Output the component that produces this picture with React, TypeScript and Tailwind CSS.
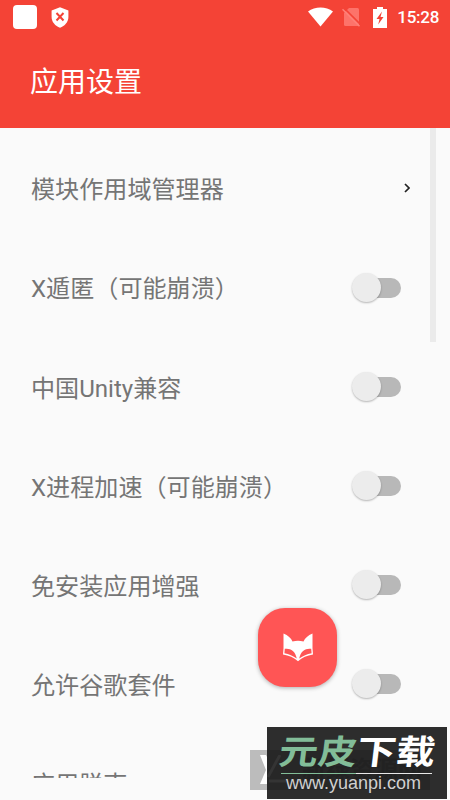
import { useState } from 'react';

const settings = [
  'X遁匿（可能崩溃）',
  '中国Unity兼容',
  'X进程加速（可能崩溃）',
  '免安装应用增强',
  '允许谷歌套件',
  '应用脱壳',
];

function StatusBar() {
  return (
    <div className="flex h-[35px] items-center pl-[13px] pr-[11px] text-white">
      <div className="mt-[-1px] h-[24px] w-[24px] rounded-[4px] bg-white" />
      <svg className="ml-[14px] h-[21px] w-[18px]" viewBox="0 0 18 21">
        <path d="M9 .2 17.400 3.400v6.500c0 5-3.700 9-8.400 10.800C4.300 18.900.6 14.900.6 9.900V3.400z" fill="#fff" />
        <path d="m5.500 6 7 7.500m0-7.500-7 7.500" stroke="#f44336" strokeWidth="2" />
      </svg>
      <svg className="ml-auto mt-[-2px] h-[20px] w-[25px]" viewBox="0 0 25 20">
        <path d="M0 4.500C7-.9 18-.9 25 4.500L12.500 19.500z" fill="#fff" />
      </svg>
      <svg className="ml-[9px] mt-[-1px] h-[20px] w-[19px]" viewBox="0 0 19 20">
        <path d="M7 1h8.500a1.500 1.500 0 0 1 1.500 1.500V19H3.500A1.500 1.500 0 0 1 2 17.500V6z" fill="#ff8078" fillOpacity=".8" />
        <path d="m2 1 17 17" stroke="#f44336" strokeWidth="1.600" />
        <path d="m.5 2.200 17 17" stroke="#ff8078" strokeWidth="1.600" />
      </svg>
      <svg className="ml-[12px] mt-[-1px] h-[21px] w-[14px]" viewBox="0 0 14 21">
        <path d="M4 0h6v2h4v19H0V2h4z" fill="#fff" />
        <path d="M9 4.500 3.500 12h3l-1.300 5.500L10.500 10h-3z" fill="#f44336" />
      </svg>
      <span className="ml-[10px] text-[17px] font-medium tracking-[-0.3px]">15:28</span>
    </div>
  );
}

function Toggle({ label }: { label: string }) {
  const [on, setOn] = useState(false);

  return (
    <button
      type="button"
      role="switch"
      aria-checked={on}
      aria-label={label}
      onClick={() => setOn(!on)}
      className={`flex h-[20px] w-[48px] items-center rounded-full ${on ? 'justify-end bg-red-300' : 'bg-[#b8b8b8]'}`}
    >
      <span className="-ml-px h-[29px] w-[29px] shrink-0 rounded-full bg-[#ececec] shadow-[0_1px_2px_rgba(0,0,0,0.28)]" />
    </button>
  );
}

function FoxIcon() {
  return (
    <svg className="h-[30px] w-[32px]" viewBox="0 0 32 30">
      {/* head */}
      <path d="M1.500.5C6 2.500 9 5 10.500 8.500 14 7.600 18 7.600 21.500 8.500 23 5 26 2.500 30.500.5v14.800L31 21.500c-6 .8-10.800 3.300-15 6.700-4.200-3.400-9-5.900-15-6.700l.5-6.200z" fill="#fff" />
      {/* cheeks */}
      <path d="M2.800 15.800C8 15 13.200 17.500 14.800 25.500 11 22.700 7 21 2.400 20.200z" fill="#ff5555" />
      <path d="M29.200 15.800C24 15 18.800 17.500 17.200 25.500 21 22.700 25 21 29.600 20.200z" fill="#ff5555" />
    </svg>
  );
}

function Watermark() {
  return (
    <div className="absolute left-[250px] top-[727px] h-[73px] w-[200px]">
      <div className="absolute left-0 top-[23px] h-[40px] w-[17px] bg-[#bcbcbc]" />
      <svg className="absolute left-[10px] top-[28px] h-[29px] w-[7px]" viewBox="0 0 7 29">
        <path d="M0 0h6l1 2v27H0l6-14z" fill="#fff" />
      </svg>
      <div className="absolute left-[17px] top-0 h-[72px] w-[180px] bg-[#2d2d2d]" />
      <div className="absolute left-[17px] top-[23px] h-[40px] w-[163px] bg-[#272727]" />
      <svg className="absolute left-[17px] top-[28px] h-[29px] w-[22px]" viewBox="0 0 22 29">
        <path d="M13 0 1 22M2 26h17" fill="none" stroke="#343434" strokeWidth="3" />
      </svg>
      <div className="absolute left-[52px] top-[30px] whitespace-nowrap text-[24px] font-bold leading-[26px] text-[#222222]">
        新绿资源网
      </div>
      <div className="absolute left-[29px] top-[7px] flex origin-center -skew-x-6 scale-y-[0.86] whitespace-nowrap text-[39px] font-bold leading-[38px]">
        <span className="text-[#82bd98]">元皮</span>
        <span className="text-white">下载</span>
      </div>
      <div className="absolute left-[31px] top-[46px] flex h-px w-[151px]">
        <div className="w-[75px] bg-[#82bd98]" />
        <div className="flex-1 bg-[#e8e8e8]" />
      </div>
      <div className="absolute left-[36px] top-[46px] font-['Liberation_Sans',sans-serif] text-[18px] leading-[20px] text-[#d0d0d0]">
        www.yuanpi.com
      </div>
    </div>
  );
}

export default function App() {
  return (
    <div className="relative h-[800px] w-[450px] overflow-hidden bg-[#fafafa] font-['Roboto','Noto_Sans_CJK_SC',sans-serif]">
      <header className="h-[128px] bg-[#f44336]">
        <StatusBar />
        <h1 className="pl-[30px] pt-[27px] text-[28px] leading-[42px] text-white">应用设置</h1>
      </header>
      <main className="flex h-[650px] overflow-hidden">
        <ul className="flex-1 pt-[11px] text-[24.1px] text-[#757575]">
          <li className="flex h-[99px] items-center justify-between pl-[31px] pr-[20px]">
            <span className="pt-[4px]">模块作用域管理器</span>
            <svg className="mb-px h-[10px] w-[6px]" viewBox="0 0 6 10">
              <path d="m1 1 4 4-4 4" fill="none" stroke="#222" strokeWidth="1.700" />
            </svg>
          </li>
          {settings.map((label) => (
            <li key={label} className="flex h-[99.1px] items-center justify-between pl-[31px] pr-[29px]">
              <span className="pt-[4px]">{label}</span>
              <Toggle label={label} />
            </li>
          ))}
        </ul>
        <div className="mr-[14px] h-[214px] w-[6px] bg-[#ebebeb]" />
      </main>
      <button
        type="button"
        aria-label="fox"
        className="absolute left-[258px] top-[608px] flex h-[79px] w-[79px] items-center justify-center rounded-[27px] bg-[#ff5555] shadow-[0_1px_4px_rgba(0,0,0,0.3)]"
      >
        <FoxIcon />
      </button>
      <Watermark />
    </div>
  );
}
